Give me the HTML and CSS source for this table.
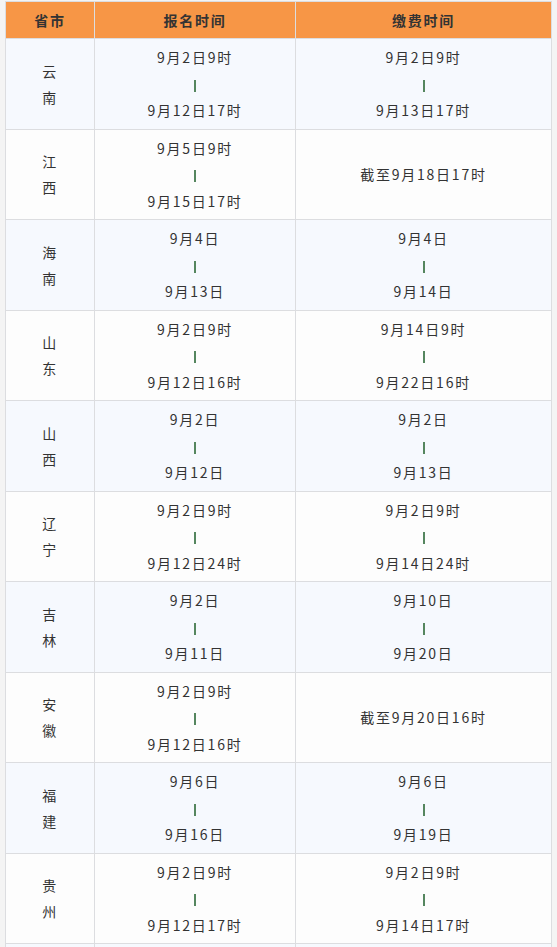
FILE: index.html
```html
<!DOCTYPE html>
<html lang="zh">
<head>
<meta charset="utf-8">
<title>报名缴费时间</title>
<link rel="stylesheet" href="styles.css">
</head>
<body>
<table class="sched">
  <colgroup>
    <col class="c-prov">
    <col class="c-reg">
    <col class="c-pay">
  </colgroup>
  <thead>
    <tr><th>省市</th><th>报名时间</th><th>缴费时间</th></tr>
  </thead>
  <tbody>
    <tr>
      <td class="prov">云<br>南</td>
      <td>9月2日9时<br><span class="bar"></span><br>9月12日17时</td>
      <td>9月2日9时<br><span class="bar"></span><br>9月13日17时</td>
    </tr>
    <tr>
      <td class="prov">江<br>西</td>
      <td>9月5日9时<br><span class="bar"></span><br>9月15日17时</td>
      <td>截至9月18日17时</td>
    </tr>
    <tr>
      <td class="prov">海<br>南</td>
      <td>9月4日<br><span class="bar"></span><br>9月13日</td>
      <td>9月4日<br><span class="bar"></span><br>9月14日</td>
    </tr>
    <tr>
      <td class="prov">山<br>东</td>
      <td>9月2日9时<br><span class="bar"></span><br>9月12日16时</td>
      <td>9月14日9时<br><span class="bar"></span><br>9月22日16时</td>
    </tr>
    <tr>
      <td class="prov">山<br>西</td>
      <td>9月2日<br><span class="bar"></span><br>9月12日</td>
      <td>9月2日<br><span class="bar"></span><br>9月13日</td>
    </tr>
    <tr>
      <td class="prov">辽<br>宁</td>
      <td>9月2日9时<br><span class="bar"></span><br>9月12日24时</td>
      <td>9月2日9时<br><span class="bar"></span><br>9月14日24时</td>
    </tr>
    <tr>
      <td class="prov">吉<br>林</td>
      <td>9月2日<br><span class="bar"></span><br>9月11日</td>
      <td>9月10日<br><span class="bar"></span><br>9月20日</td>
    </tr>
    <tr>
      <td class="prov">安<br>徽</td>
      <td>9月2日9时<br><span class="bar"></span><br>9月12日16时</td>
      <td>截至9月20日16时</td>
    </tr>
    <tr>
      <td class="prov">福<br>建</td>
      <td>9月6日<br><span class="bar"></span><br>9月16日</td>
      <td>9月6日<br><span class="bar"></span><br>9月19日</td>
    </tr>
    <tr>
      <td class="prov">贵<br>州</td>
      <td>9月2日9时<br><span class="bar"></span><br>9月12日17时</td>
      <td>9月2日9时<br><span class="bar"></span><br>9月14日17时</td>
    </tr>
    <tr>
      <td class="prov"></td>
      <td></td>
      <td></td>
    </tr>
  </tbody>
</table>
</body>
</html>
```

FILE: styles.css
```css
html, body {
  background: #f4f4f4;
}
body {
  margin: 1px 0 0 5px;
  font-family: "Noto Sans CJK SC", "Noto Sans", sans-serif;
  font-size: 14px;
  color: #333333;
}
.sched {
  border-collapse: collapse;
  table-layout: fixed;
  width: 546px;
}
.c-prov { width: 89px; }
.c-reg { width: 201px; }
.c-pay { width: 256px; }
.sched th,
.sched td {
  border: 1px solid #dcdde0;
  text-align: center;
  vertical-align: middle;
  padding: 0;
  letter-spacing: 1.75px;
}
.sched th {
  background: #f79646;
  height: 36px;
  font-weight: bold;
  color: #333333;
  line-height: 36px;
}
.sched td {
  padding: 5px 0;
  line-height: 26.5px;
  height: 79.5px;
  color: #333333;
}
.sched td.prov {
  line-height: 26px;
  color: #333333;
}
.sched tbody tr:nth-child(odd) td {
  background: #f6f9fe;
}
.sched tbody tr:nth-child(even) td {
  background: #fdfdfd;
}
.bar {
  display: inline-block;
  width: 2px;
  height: 12px;
  background: #55865f;
  vertical-align: middle;
}
```
